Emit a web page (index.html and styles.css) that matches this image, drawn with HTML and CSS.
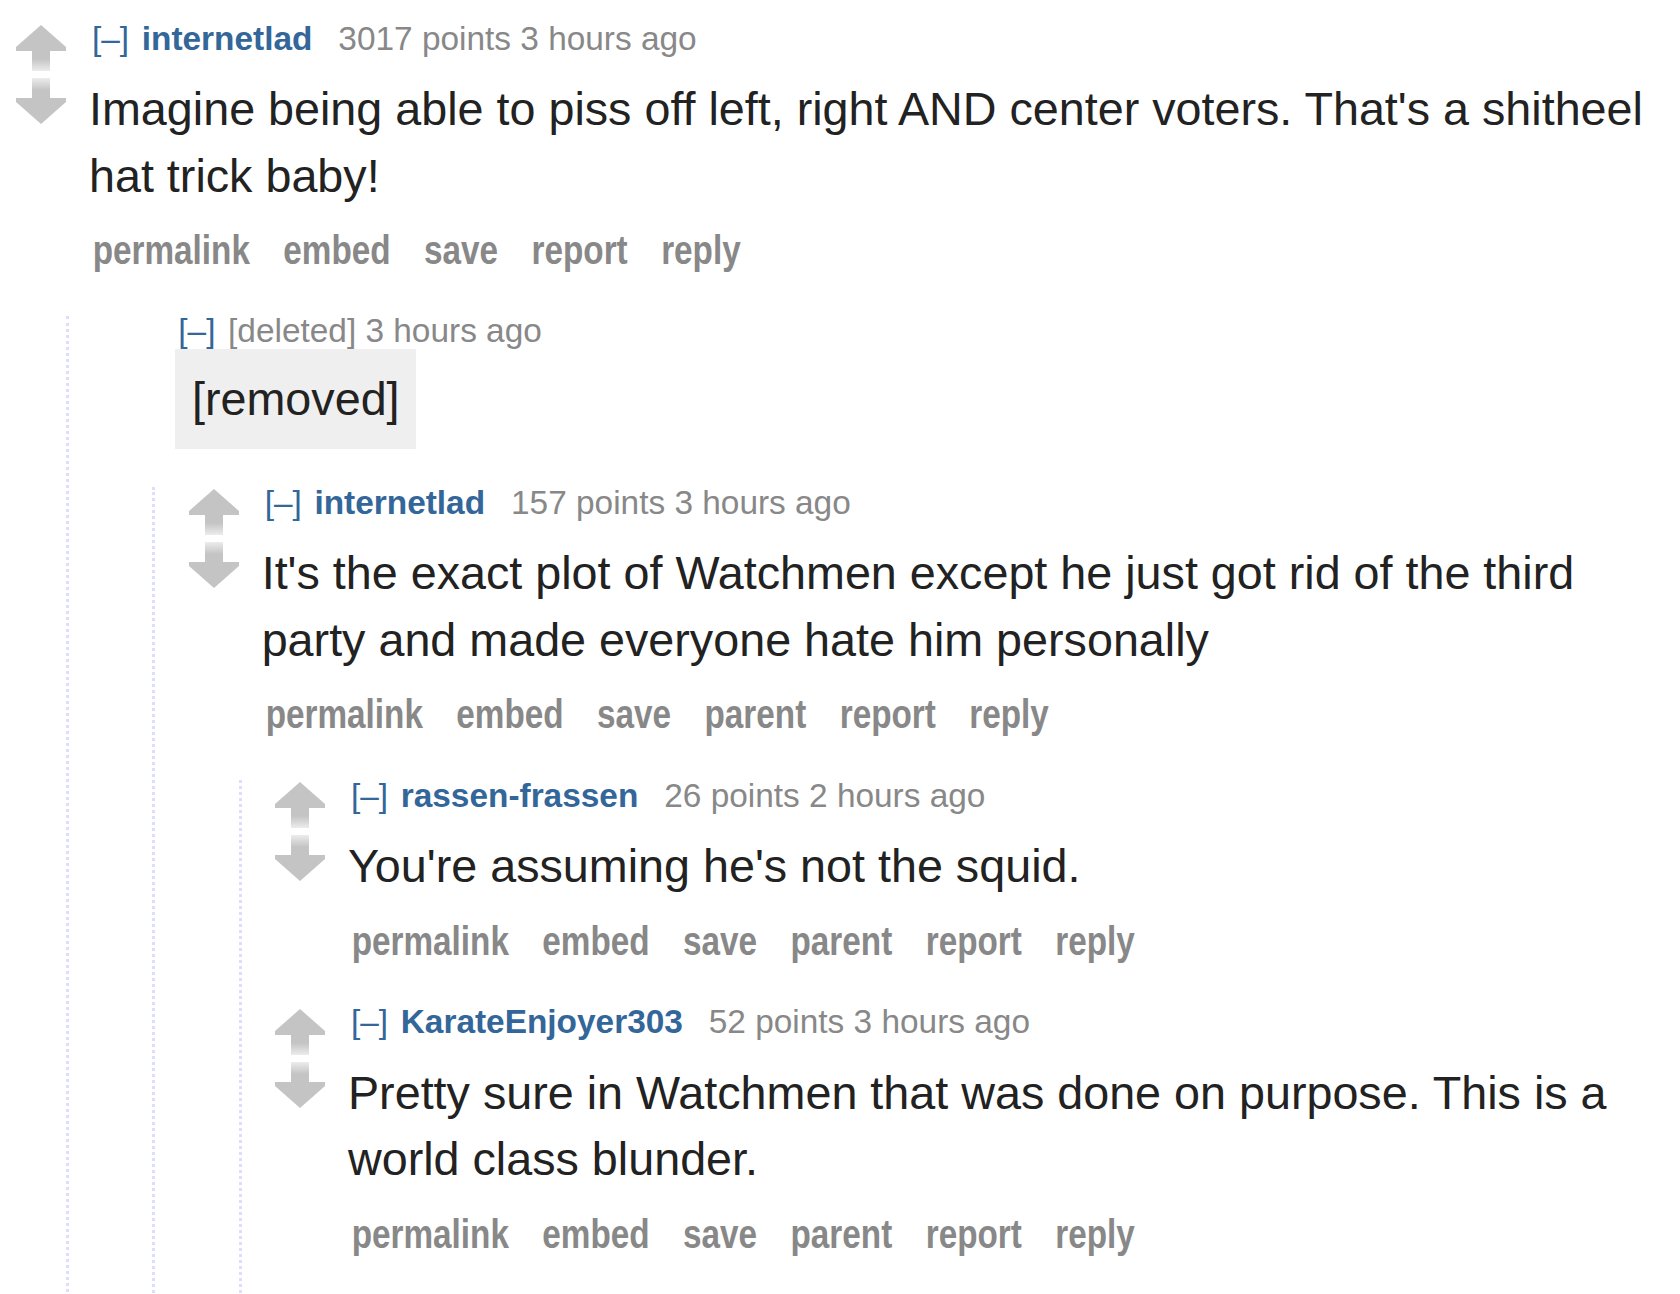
FILE: index.html
```html
<!DOCTYPE html>
<html lang="en">
<head>
<meta charset="utf-8">
<title>comments</title>
<link rel="stylesheet" href="styles.css">
</head>
<body>
<div class="commentarea">

  <div class="comment">
    <div class="row">
      <div class="midcol">
        <svg class="arrow" viewBox="0 0 50 46" width="50" height="46"><defs><linearGradient id="gu1" gradientUnits="userSpaceOnUse" x1="0" y1="0" x2="0" y2="46"><stop offset="0" stop-color="#c4c4c4"/><stop offset="0.74" stop-color="#c4c4c4"/><stop offset="1" stop-color="#ececec"/></linearGradient></defs><path d="M25 0 L50 22 V26 H34 V46 H16 V26 H0 V22 Z" fill="url(#gu1)"/></svg>
        <svg class="arrow" viewBox="0 0 50 46" width="50" height="46"><defs><linearGradient id="gd1" gradientUnits="userSpaceOnUse" x1="0" y1="0" x2="0" y2="46"><stop offset="0" stop-color="#ececec"/><stop offset="0.26" stop-color="#c4c4c4"/><stop offset="1" stop-color="#c4c4c4"/></linearGradient></defs><path d="M16 0 H34 V20 H50 V24 L25 46 L0 24 V20 H16 Z" fill="url(#gd1)"/></svg>
      </div>
      <div class="entry">
        <p class="tagline"><a class="expand">[–]</a> <a class="author">internetlad</a> <span class="score">3017 points</span> <time>3 hours ago</time></p>
        <div class="md"><p>Imagine being able to piss off left, right AND center voters. That's a shitheel hat trick baby!</p></div>
        <ul class="buttons">
          <li>permalink</li><li>embed</li><li>save</li><li>report</li><li>reply</li>
        </ul>
      </div>
    </div>

    <div class="child">

      <div class="comment">
        <div class="row">
          <div class="midcol"></div>
          <div class="entry entry-deleted">
            <p class="tagline tagline-deleted"><a class="expand">[–]</a> <span class="gone">[deleted]</span> <time>3 hours ago</time></p>
            <div class="md removed"><p>[removed]</p></div>
          </div>
        </div>

        <div class="child">

          <div class="comment">
            <div class="row">
              <div class="midcol">
                <svg class="arrow" viewBox="0 0 50 46" width="50" height="46"><defs><linearGradient id="gu3" gradientUnits="userSpaceOnUse" x1="0" y1="0" x2="0" y2="46"><stop offset="0" stop-color="#c4c4c4"/><stop offset="0.74" stop-color="#c4c4c4"/><stop offset="1" stop-color="#ececec"/></linearGradient></defs><path d="M25 0 L50 22 V26 H34 V46 H16 V26 H0 V22 Z" fill="url(#gu3)"/></svg>
                <svg class="arrow" viewBox="0 0 50 46" width="50" height="46"><defs><linearGradient id="gd3" gradientUnits="userSpaceOnUse" x1="0" y1="0" x2="0" y2="46"><stop offset="0" stop-color="#ececec"/><stop offset="0.26" stop-color="#c4c4c4"/><stop offset="1" stop-color="#c4c4c4"/></linearGradient></defs><path d="M16 0 H34 V20 H50 V24 L25 46 L0 24 V20 H16 Z" fill="url(#gd3)"/></svg>
              </div>
              <div class="entry">
                <p class="tagline"><a class="expand">[–]</a> <a class="author">internetlad</a> <span class="score">157 points</span> <time>3 hours ago</time></p>
                <div class="md"><p>It's the exact plot of Watchmen except he just got rid of the third party and made everyone hate him personally</p></div>
                <ul class="buttons">
                  <li>permalink</li><li>embed</li><li>save</li><li>parent</li><li>report</li><li>reply</li>
                </ul>
              </div>
            </div>

            <div class="child">

              <div class="comment">
                <div class="row">
                  <div class="midcol">
                    <svg class="arrow" viewBox="0 0 50 46" width="50" height="46"><defs><linearGradient id="gu4" gradientUnits="userSpaceOnUse" x1="0" y1="0" x2="0" y2="46"><stop offset="0" stop-color="#c4c4c4"/><stop offset="0.74" stop-color="#c4c4c4"/><stop offset="1" stop-color="#ececec"/></linearGradient></defs><path d="M25 0 L50 22 V26 H34 V46 H16 V26 H0 V22 Z" fill="url(#gu4)"/></svg>
                    <svg class="arrow" viewBox="0 0 50 46" width="50" height="46"><defs><linearGradient id="gd4" gradientUnits="userSpaceOnUse" x1="0" y1="0" x2="0" y2="46"><stop offset="0" stop-color="#ececec"/><stop offset="0.26" stop-color="#c4c4c4"/><stop offset="1" stop-color="#c4c4c4"/></linearGradient></defs><path d="M16 0 H34 V20 H50 V24 L25 46 L0 24 V20 H16 Z" fill="url(#gd4)"/></svg>
                  </div>
                  <div class="entry">
                    <p class="tagline"><a class="expand">[–]</a> <a class="author">rassen-frassen</a> <span class="score">26 points</span> <time>2 hours ago</time></p>
                    <div class="md"><p>You're assuming he's not the squid.</p></div>
                    <ul class="buttons">
                      <li>permalink</li><li>embed</li><li>save</li><li>parent</li><li>report</li><li>reply</li>
                    </ul>
                  </div>
                </div>
              </div>

              <div class="comment">
                <div class="row">
                  <div class="midcol">
                    <svg class="arrow" viewBox="0 0 50 46" width="50" height="46"><defs><linearGradient id="gu5" gradientUnits="userSpaceOnUse" x1="0" y1="0" x2="0" y2="46"><stop offset="0" stop-color="#c4c4c4"/><stop offset="0.74" stop-color="#c4c4c4"/><stop offset="1" stop-color="#ececec"/></linearGradient></defs><path d="M25 0 L50 22 V26 H34 V46 H16 V26 H0 V22 Z" fill="url(#gu5)"/></svg>
                    <svg class="arrow" viewBox="0 0 50 46" width="50" height="46"><defs><linearGradient id="gd5" gradientUnits="userSpaceOnUse" x1="0" y1="0" x2="0" y2="46"><stop offset="0" stop-color="#ececec"/><stop offset="0.26" stop-color="#c4c4c4"/><stop offset="1" stop-color="#c4c4c4"/></linearGradient></defs><path d="M16 0 H34 V20 H50 V24 L25 46 L0 24 V20 H16 Z" fill="url(#gd5)"/></svg>
                  </div>
                  <div class="entry">
                    <p class="tagline"><a class="expand">[–]</a> <a class="author">KarateEnjoyer303</a> <span class="score">52 points</span> <time>3 hours ago</time></p>
                    <div class="md"><p>Pretty sure in Watchmen that was done on purpose. This is a world class blunder.</p></div>
                    <ul class="buttons">
                      <li>permalink</li><li>embed</li><li>save</li><li>parent</li><li>report</li><li>reply</li>
                    </ul>
                  </div>
                </div>
              </div>

            </div>
          </div>

        </div>
      </div>

    </div>
  </div>

</div>
</body>
</html>
```

FILE: styles.css
```css
html, body {
  margin: 0;
  padding: 0;
  background: #ffffff;
}

body {
  font-family: "Liberation Sans", Arial, sans-serif;
  color: #222222;
}

.commentarea {
  padding: 22.5px 8px 0 16px;
}

.comment {
  display: flex;
  flex-direction: column;
}

.row {
  display: flex;
  align-items: flex-start;
}

.midcol {
  flex: 0 0 50px;
  width: 50px;
  margin-right: 23px;
  padding-top: 2.5px;
  display: flex;
  flex-direction: column;
  gap: 7px;
}

.arrow {
  display: block;
  width: 50px;
  height: 46px;
}

.entry {
  flex: 1 1 auto;
  min-width: 0;
  padding-bottom: 42.4px;
}

.entry-deleted {
  padding-bottom: 37.8px;
}

.tagline {
  margin: 0;
  padding-left: 3px;
  font-size: 33.4px;
  line-height: 31px;
  color: #888888;
  white-space: nowrap;
}

.tagline-deleted {
  margin-top: -1px;
  margin-bottom: 1px;
}

.expand {
  color: #336699;
  margin-right: 3.33px;
}

.author {
  color: #336699;
  font-weight: bold;
  margin-right: 16.67px;
}

.gone {
  color: #888888;
}

.md {
  margin-top: 22.5px;
  font-size: 46.7px;
  line-height: 66.67px;
  color: #222222;
}

.md p {
  margin: 0;
}

.md.removed {
  display: inline-block;
  margin-top: 2.5px;
  padding: 16.67px;
  line-height: 66.67px;
  background: #efefef;
}

/* Arial Narrow bold look: Liberation Sans bold condensed to 82% */
.buttons {
  list-style: none;
  margin: 17.8px 0 0 0;
  padding: 0 0 0 4.5px;
  display: flex;
  gap: 40.8px;
  font-family: "Liberation Sans", Arial, sans-serif;
  font-weight: bold;
  font-size: 40.6px;
  line-height: 46px;
  color: #888888;
  white-space: nowrap;
  transform: scaleX(0.82);
  transform-origin: 0 0;
}

.child {
  display: flex;
  flex-direction: column;
  margin-left: 50px;
  border-left: 3.33px dotted #ddddff;
  padding-left: 33.33px;
}
```
